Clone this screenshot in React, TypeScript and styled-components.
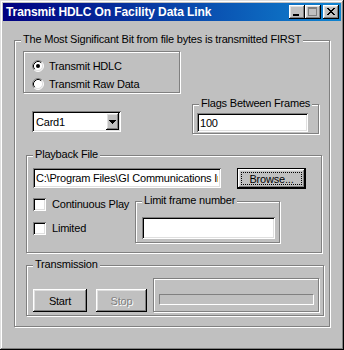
import React from "react";
import styled, { createGlobalStyle, css } from "styled-components";

const GlobalStyle = createGlobalStyle`
  html, body { margin: 0; padding: 0; background: #c0c0c0; }
  body {
    font-family: "Liberation Sans", Arial, sans-serif;
    font-size: 11px;
    letter-spacing: -0.2px;
    color: #000;
  }
`;

const raised = css`
  box-shadow: inset -1px -1px 0 #000, inset 1px 1px 0 #fff,
    inset -2px -2px 0 #808080, inset 2px 2px 0 #dfdfdf;
`;

const sunken = css`
  box-shadow: inset 1px 1px 0 #808080, inset -1px -1px 0 #fff,
    inset 2px 2px 0 #000, inset -2px -2px 0 #dfdfdf;
`;

const Window = styled.div`
  width: 344px;
  height: 350px;
  box-sizing: border-box;
  padding: 3px;
  display: flex;
  flex-direction: column;
  background: #c0c0c0;
  box-shadow: inset -1px -1px 0 #000, inset 1px 1px 0 #dfdfdf,
    inset -2px -2px 0 #808080, inset 2px 2px 0 #fff;
`;

const TitleBar = styled.div`
  height: 18px;
  flex: none;
  display: flex;
  align-items: center;
  padding: 0 2px 0 3px;
  background: linear-gradient(to right, #000080, #1084d0);
`;

const TitleText = styled.span`
  flex: 1;
  color: #fff;
  font-weight: bold;
  font-size: 12px;
  letter-spacing: -0.1px;
  white-space: nowrap;
`;

const CaptionButton = styled.div<{ $gap?: boolean }>`
  width: 16px;
  height: 14px;
  margin-left: ${(p) => (p.$gap ? 2 : 0)}px;
  background: #c0c0c0;
  ${raised}
  display: flex;
  svg { display: block; }
`;

const Client = styled.div`
  flex: 1;
  padding: 19px 0 0 11px;
`;

const Group = styled.div`
  position: relative;
  box-sizing: border-box;
  border: 1px solid #808080;
  box-shadow: inset 1px 1px 0 #fff, 1px 1px 0 #fff;
`;

const Legend = styled.span`
  position: absolute;
  top: -8px;
  left: 6px;
  padding: 0 2px;
  line-height: 13px;
  background: #c0c0c0;
  white-space: nowrap;
`;

const MainGroup = styled(Group)`
  width: 316px;
  height: 287px;
  padding: 10px 0 0 8px;
  display: flex;
  flex-direction: column;
  align-items: flex-start;
`;

const RadioFrame = styled(Group)`
  width: 157px;
  height: 42px;
  padding: 6px 0 0 8px;
  display: flex;
  flex-direction: column;
  gap: 2px;
`;

const OptionRow = styled.div`
  height: 16px;
  display: flex;
  align-items: center;
  gap: 5px;
  white-space: nowrap;
  svg { display: block; flex: none; }
`;

const SettingsRow = styled.div`
  display: flex;
  align-items: flex-start;
  margin-top: 11px;
`;

const Combo = styled.div`
  margin: 7px 0 0 9px;
  width: 89px;
  height: 21px;
  box-sizing: border-box;
  padding: 2px;
  background: #fff;
  ${sunken}
  display: flex;
  align-items: center;
`;

const ComboText = styled.span`
  flex: 1;
  padding-left: 2px;
`;

const ComboButton = styled.div`
  width: 13px;
  height: 17px;
  background: #c0c0c0;
  ${raised}
  display: flex;
  align-items: center;
  justify-content: center;
  svg { display: block; }
`;

const FlagsGroup = styled(Group)`
  margin-left: 71px;
  width: 127px;
  height: 30px;
  padding: 8px 0 0 4px;
`;

const TextBox = styled.input<{ $w: number; $h: number }>`
  display: block;
  box-sizing: border-box;
  width: ${(p) => p.$w}px;
  height: ${(p) => p.$h}px;
  margin: 0;
  padding: 0 3px;
  border: 0;
  outline: none;
  background: #fff;
  font: inherit;
  letter-spacing: inherit;
  color: #000;
  ${sunken}
`;

const PlaybackGroup = styled(Group)`
  margin: 21px 0 0 3px;
  width: 296px;
  height: 98px;
  padding: 12px 0 0 6px;
  display: flex;
  flex-direction: column;
`;

const PathRow = styled.div`
  display: flex;
  align-items: flex-start;
`;

const PushButton = styled.div<{ $w: number; $disabled?: boolean }>`
  position: relative;
  box-sizing: border-box;
  width: ${(p) => p.$w}px;
  height: 23px;
  background: #c0c0c0;
  ${raised}
  display: flex;
  align-items: center;
  justify-content: center;
  color: ${(p) => (p.$disabled ? "#808080" : "#000")};
  text-shadow: ${(p) => (p.$disabled ? "1px 1px 0 #fff" : "none")};
`;

const DefaultButton = styled(PushButton)`
  margin-left: 16px;
  height: 21px;
  box-shadow: inset 0 0 0 1px #000, inset -2px -2px 0 #000, inset 2px 2px 0 #fff,
    inset -3px -3px 0 #808080, inset 3px 3px 0 #dfdfdf;
  &::after {
    content: "";
    position: absolute;
    inset: 4px;
    border: 1px dotted #000;
  }
`;

const OptionsRow = styled.div`
  display: flex;
  align-items: flex-start;
`;

const CheckColumn = styled.div`
  width: 102px;
  margin-top: 3px;
  display: flex;
  flex-direction: column;
`;

const CheckRow = styled.div`
  height: 24px;
  display: flex;
  align-items: center;
  gap: 6px;
  white-space: nowrap;
`;

const CheckBox = styled.span`
  width: 13px;
  height: 13px;
  flex: none;
  background: #fff;
  ${sunken}
`;

const LimitGroup = styled(Group)`
  margin-top: 12px;
  width: 145px;
  height: 42px;
  padding: 15px 0 0 6px;
`;

const TransmissionGroup = styled(Group)`
  margin: 12px 0 0 3px;
  width: 298px;
  height: 51px;
  padding: 0 0 0 6px;
  display: flex;
  align-items: flex-start;
`;

const StartButton = styled(PushButton)`
  margin-top: 23px;
`;

const StopButton = styled(PushButton)`
  margin: 23px 0 0 9px;
`;

const ProgressPanel = styled.div`
  margin: 12px 0 0 6px;
  width: 166px;
  height: 34px;
  box-sizing: border-box;
  padding: 15px 0 0 5px;
  border: 1px solid #808080;
  box-shadow: inset 1px 1px 0 #fff, 1px 1px 0 #fff;
`;

const ProgressBar = styled.div`
  width: 155px;
  height: 11px;
  box-sizing: border-box;
  border: 1px solid;
  border-color: #808080 #fff #fff #808080;
`;

const Radio = ({ checked }: { checked?: boolean }) => (
  <svg width="12" height="12" viewBox="0 0 12 12">
    <circle cx="6" cy="6" r="5" fill="#fff" />
    <path d="M2.11 9.89 A5.5 5.5 0 0 1 9.89 2.11" stroke="#808080" fill="none" />
    <path d="M9.89 2.11 A5.5 5.5 0 0 1 2.11 9.89" stroke="#fff" fill="none" />
    <path d="M2.82 9.18 A4.5 4.5 0 0 1 9.18 2.82" stroke="#000" fill="none" />
    <path d="M9.18 2.82 A4.5 4.5 0 0 1 2.82 9.18" stroke="#dfdfdf" fill="none" />
    {checked && <circle cx="6" cy="6" r="2" fill="#000" />}
  </svg>
);

const CloseGlyph = () => (
  <svg width="16" height="14" viewBox="0 0 16 14" shapeRendering="crispEdges">
    {[0, 1, 2, 3, 4, 5, 6].map((i) => (
      <g key={i}>
        <rect x={4 + i} y={3 + i} width="2" height="1" fill="#000" />
        <rect x={10 - i} y={3 + i} width="2" height="1" fill="#000" />
      </g>
    ))}
  </svg>
);

const MinGlyph = () => (
  <svg width="16" height="14" viewBox="0 0 16 14" shapeRendering="crispEdges">
    <rect x="4" y="9" width="6" height="2" fill="#000" />
  </svg>
);

const MaxGlyph = () => (
  <svg width="16" height="14" viewBox="0 0 16 14" shapeRendering="crispEdges">
    <rect x="3.5" y="2.5" width="8" height="8" fill="none" stroke="#808080" />
    <rect x="3" y="2" width="9" height="2" fill="#808080" />
  </svg>
);

const DownArrow = () => (
  <svg width="7" height="4" viewBox="0 0 7 4" shapeRendering="crispEdges">
    <rect x="0" y="0" width="7" height="1" fill="#000" />
    <rect x="1" y="1" width="5" height="1" fill="#000" />
    <rect x="2" y="2" width="3" height="1" fill="#000" />
    <rect x="3" y="3" width="1" height="1" fill="#000" />
  </svg>
);

export default function App() {
  return (
    <>
      <GlobalStyle />
      <Window>
        <TitleBar>
          <TitleText>Transmit HDLC On Facility Data Link</TitleText>
          <CaptionButton><MinGlyph /></CaptionButton>
          <CaptionButton><MaxGlyph /></CaptionButton>
          <CaptionButton $gap><CloseGlyph /></CaptionButton>
        </TitleBar>
        <Client>
          <MainGroup>
            <Legend>The Most Significant Bit from file bytes is transmitted FIRST</Legend>
            <RadioFrame>
              <OptionRow><Radio checked />Transmit HDLC</OptionRow>
              <OptionRow><Radio />Transmit Raw Data</OptionRow>
            </RadioFrame>
            <SettingsRow>
              <Combo>
                <ComboText>Card1</ComboText>
                <ComboButton><DownArrow /></ComboButton>
              </Combo>
              <FlagsGroup>
                <Legend>Flags Between Frames</Legend>
                <TextBox $w={111} $h={19} defaultValue="100" />
              </FlagsGroup>
            </SettingsRow>
            <PlaybackGroup>
              <Legend>Playback File</Legend>
              <PathRow>
                <TextBox $w={188} $h={20} defaultValue="C:\Program Files\GI Communications Inc" />
                <DefaultButton $w={69}>Browse...</DefaultButton>
              </PathRow>
              <OptionsRow>
                <CheckColumn>
                  <CheckRow><CheckBox />Continuous Play</CheckRow>
                  <CheckRow><CheckBox />Limited</CheckRow>
                </CheckColumn>
                <LimitGroup>
                  <Legend>Limit frame number</Legend>
                  <TextBox $w={133} $h={22} defaultValue="" />
                </LimitGroup>
              </OptionsRow>
            </PlaybackGroup>
            <TransmissionGroup>
              <Legend>Transmission</Legend>
              <StartButton $w={54}>Start</StartButton>
              <StopButton $w={51} $disabled>Stop</StopButton>
              <ProgressPanel>
                <ProgressBar />
              </ProgressPanel>
            </TransmissionGroup>
          </MainGroup>
        </Client>
      </Window>
    </>
  );
}
